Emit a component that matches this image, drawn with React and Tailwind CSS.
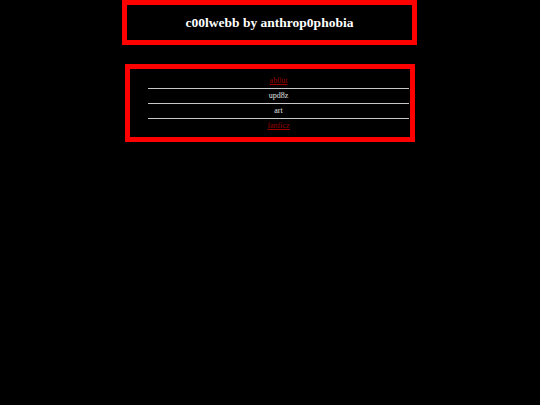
import React from 'react';

const links = [
  { label: 'ab0ut', href: true },
  { label: 'upd8z', href: false },
  { label: 'art', href: false },
  { label: 'fanficz', href: true },
];

export default function App() {
  return (
    <div
      className="w-full h-[405px] bg-black flex flex-col items-center"
      style={{ fontFamily: '"Liberation Serif", "Times New Roman", serif' }}
    >
      {/* header */}
      <div className="ml-[-1px] w-[295px] h-[45px] border-[5px] border-[#ff0000] flex items-center justify-center">
        <h1 className="text-[13.5px] font-bold text-white leading-none">c00lwebb by anthrop0phobia</h1>
      </div>

      {/* nav */}
      <div className="mt-[19px] w-[290px] h-[78px] border-[5px] border-[#ff0000] pt-[4px] pl-[18px] pr-[1px]">
        <ul className="w-full">
          {links.map((l, i) => (
            <li
              key={l.label}
              className={`h-[15px] flex items-center justify-center text-[8px] leading-none ${i > 0 ? 'border-t border-[#c8c8c8]' : ''}`}
            >
              {l.href ? (
                <a href="#" className="text-[#990000] underline">{l.label}</a>
              ) : (
                <span className="text-[#e0e0e0]">{l.label}</span>
              )}
            </li>
          ))}
        </ul>
      </div>
    </div>
  );
}
